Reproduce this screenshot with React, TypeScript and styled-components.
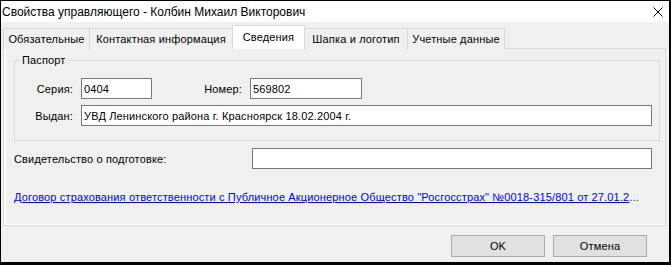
import styled, { createGlobalStyle } from 'styled-components'

const GlobalStyle = createGlobalStyle`
  html, body {
    margin: 0;
    padding: 0;
    background: #f0f0f0;
  }

  body {
    font-family: 'Liberation Sans', Arial, sans-serif;
    font-size: 11px;
    letter-spacing: 0.15px;
    color: #000;
  }
`

const Window = styled.div`
  width: 671px;
  height: 265px;
  box-sizing: border-box;

  border: 1px solid #000;
  border-right-width: 2px;
  border-bottom-width: 3px;

  background: #f0f0f0;

  display: flex;
  flex-direction: column;
`

const TitleBar = styled.div`
  height: 21px;
  background: #fff;

  display: flex;
  align-items: center;
  justify-content: space-between;

  padding: 0 6px 0 1px;
`

const Title = styled.span`
  font-size: 12px;
  line-height: 16px;
  letter-spacing: 0;
  white-space: nowrap;
`

const CloseIcon = styled.svg`
  width: 10px;
  height: 10px;
  display: block;
`

const Body = styled.div`
  padding: 3px 3px 0 2px;
  display: flex;
  flex-direction: column;
`

const TabRow = styled.div`
  height: 24px;
  display: flex;
  align-items: flex-end;
`

const Tab = styled.div<{ $active?: boolean; $w: number }>`
  box-sizing: border-box;
  width: ${(p) => p.$w}px;
  height: ${(p) => (p.$active ? 24 : 21)}px;

  border: 1px solid #d9d9d9;
  border-bottom: none;
  background: ${(p) => (p.$active ? '#fff' : '#f0f0f0')};

  display: flex;
  align-items: center;
  justify-content: center;
  padding-bottom: ${(p) => (p.$active ? 1 : 0)}px;

  white-space: nowrap;
  position: relative;
  z-index: ${(p) => (p.$active ? 1 : 0)};

  & + & {
    margin-left: -1px;
  }
`

const Panel = styled.div`
  box-sizing: border-box;
  height: 178px;
  margin-top: -1px;

  border: 1px solid #d9d9d9;
  background: #f0f0f0;
  box-shadow: inset 2px 0 0 #fff, inset 0 -1px 0 #fff;

  padding: 4px 5px 0 10px;
  display: flex;
  flex-direction: column;
`

const Group = styled.fieldset`
  margin: 0;
  min-inline-size: 0;
  border: 1px solid #dcdcdc;
  padding: 11px 7px 14px 0;

  display: flex;
  flex-direction: column;
  gap: 6px;
`

const Legend = styled.legend`
  margin-left: 5px;
  padding: 0 2px;
  line-height: 14px;
`

const Row = styled.div`
  display: flex;
  align-items: center;
  gap: 8px;
`

const Label = styled.span<{ $w: number }>`
  width: ${(p) => p.$w}px;
  text-align: right;
  white-space: nowrap;
`

const Field = styled.input<{ $w?: number }>`
  box-sizing: border-box;
  width: ${(p) => (p.$w ? `${p.$w}px` : 'auto')};
  flex: ${(p) => (p.$w ? 'none' : '1')};
  height: 21px;
  margin: 0;

  border: 1px solid #7a7a7a;
  background: #fff;
  padding: 0 2px;

  font-family: 'Liberation Sans', Arial, sans-serif;
  font-size: 11px;
  letter-spacing: 0.15px;
  color: #000;
  outline: none;
`

const CertRow = styled.div`
  margin-top: 7px;
  padding-right: 8px;
  display: flex;
  align-items: center;
`

const CertLabel = styled.span`
  flex: 1;
  white-space: nowrap;
`

const LinkRow = styled.div`
  margin-top: 21px;
  line-height: 14px;
  white-space: nowrap;
  overflow: hidden;
`

const Link = styled.a`
  color: #0000ff;
  text-decoration: underline;
  cursor: pointer;
`

const Ellipsis = styled.span`
  color: #202060;
`

const Footer = styled.div`
  padding: 9px 19px 0 0;
  display: flex;
  justify-content: flex-end;
  gap: 8px;
`

const Button = styled.button<{ $w: number }>`
  box-sizing: border-box;
  width: ${(p) => p.$w}px;
  height: 22px;
  margin: 0;

  border: 1px solid #adadad;
  background: #e1e1e1;

  font-family: 'Liberation Sans', Arial, sans-serif;
  font-size: 11px;
  letter-spacing: 0.15px;
  color: #000;
`

const tabs = [
  { title: 'Обязательные', w: 87 },
  { title: 'Контактная информация', w: 144 },
  { title: 'Сведения', w: 73, active: true },
  { title: 'Шапка и логотип', w: 104 },
  { title: 'Учетные данные', w: 98 },
]

const App = () => {
  return (
    <>
      <GlobalStyle />
      <Window>
        <TitleBar>
          <Title>Свойства управляющего - Колбин Михаил Викторович</Title>
          <CloseIcon viewBox="0 0 10 10">
            <path d="M0.5 0.5L9.5 9.5M9.5 0.5L0.5 9.5" stroke="#000" strokeWidth="1" />
          </CloseIcon>
        </TitleBar>

        <Body>
          <TabRow>
            {tabs.map((t) => (
              <Tab key={t.title} $w={t.w} $active={t.active}>
                {t.title}
              </Tab>
            ))}
          </TabRow>

          <Panel>
            <Group>
              <Legend>Паспорт</Legend>
              <Row>
                <Label $w={58}>Серия:</Label>
                <Field $w={71} value="0404" readOnly />
                <Label $w={82}>Номер:</Label>
                <Field $w={112} value="569802" readOnly />
              </Row>
              <Row>
                <Label $w={58}>Выдан:</Label>
                <Field value="УВД Ленинского района г. Красноярск 18.02.2004 г." readOnly />
              </Row>
            </Group>

            <CertRow>
              <CertLabel>Свидетельство о подготовке:</CertLabel>
              <Field $w={400} value="" readOnly />
            </CertRow>

            <LinkRow>
              <Link>
                Договор страхования ответственности с Публичное Акционерное Общество "Росгосстрах" №0018-315/801 от 27.01.2
              </Link>
              <Ellipsis>...</Ellipsis>
            </LinkRow>
          </Panel>

          <Footer>
            <Button $w={94}>OK</Button>
            <Button $w={94}>Отмена</Button>
          </Footer>
        </Body>
      </Window>
    </>
  )
}

export default App
